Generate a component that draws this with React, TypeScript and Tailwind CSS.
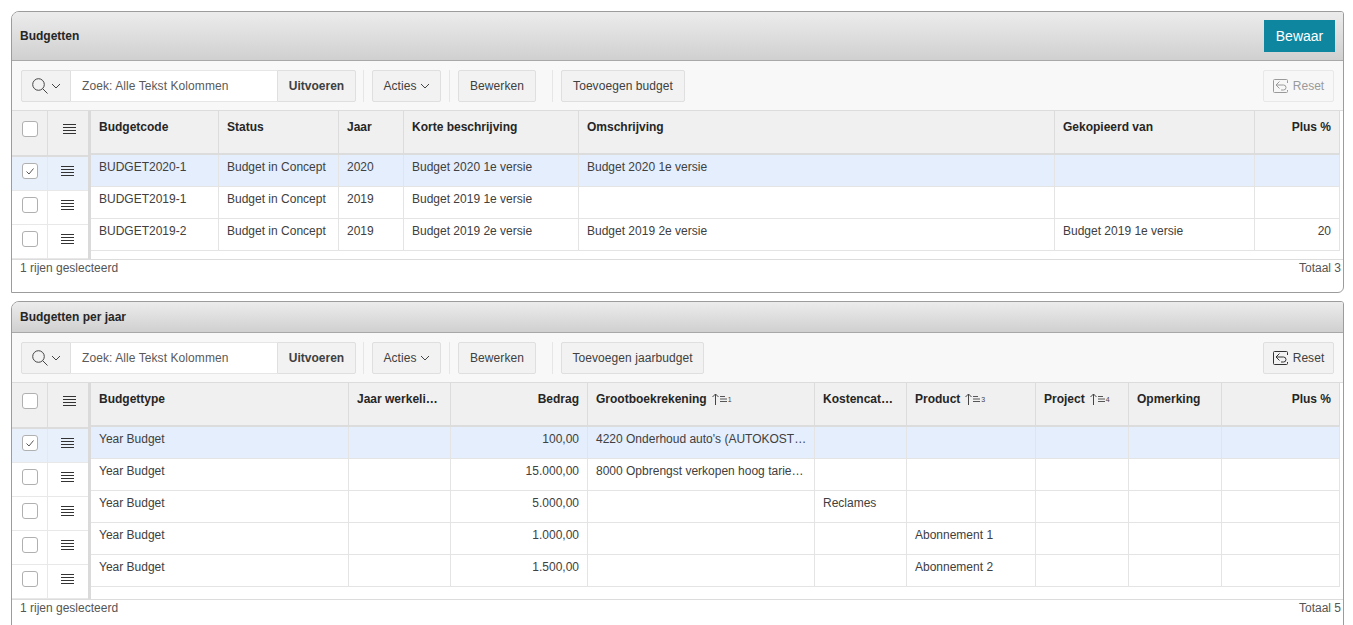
import type { ReactNode } from "react";

const budgetRows = [
  { selected: true, cells: ["BUDGET2020-1", "Budget in Concept", "2020", "Budget 2020 1e versie", "Budget 2020 1e versie", "", ""] },
  { selected: false, cells: ["BUDGET2019-1", "Budget in Concept", "2019", "Budget 2019 1e versie", "", "", ""] },
  { selected: false, cells: ["BUDGET2019-2", "Budget in Concept", "2019", "Budget 2019 2e versie", "Budget 2019 2e versie", "Budget 2019 1e versie", "20"] },
];

const yearRows = [
  { selected: true, cells: ["Year Budget", "", "100,00", "4220 Onderhoud auto's (AUTOKOST…", "", "", "", "", ""] },
  { selected: false, cells: ["Year Budget", "", "15.000,00", "8000 Opbrengst verkopen hoog tarie…", "", "", "", "", ""] },
  { selected: false, cells: ["Year Budget", "", "5.000,00", "", "Reclames", "", "", "", ""] },
  { selected: false, cells: ["Year Budget", "", "1.000,00", "", "", "Abonnement 1", "", "", ""] },
  { selected: false, cells: ["Year Budget", "", "1.500,00", "", "", "Abonnement 2", "", "", ""] },
];

function SearchIcon() {
  return (
    <svg width="16" height="16" viewBox="0 0 16 16" fill="none" stroke="#444" strokeWidth="1">
      <circle cx="6.5" cy="6.5" r="5.8" />
      <path d="M10.7 10.7 L15.5 15.5" />
    </svg>
  );
}

function Chevron() {
  return (
    <svg width="10" height="6" viewBox="0 0 9 6" fill="none" stroke="#444" strokeWidth="1">
      <path d="M0.5 1 L4.5 5 L8.5 1" />
    </svg>
  );
}

function MenuLines() {
  return (
    <svg width="13" height="11" viewBox="0 0 13 11" fill="none" stroke="#333" strokeWidth="1">
      <path d="M0 0.5H13M0 3.5H13M0 6.5H13M0 9.5H13" />
    </svg>
  );
}

function ResetIcon({ muted }: { muted: boolean }) {
  return (
    <svg width="15" height="14" viewBox="0 0 15 14" fill="none" stroke={muted ? "#9a9a9a" : "#333"} strokeWidth="1">
      <path d="M14.5 4 V1.5 Q14.5 0.5 13.5 0.5 H1.5 Q0.5 0.5 0.5 1.5 V12.5 Q0.5 13.5 1.5 13.5 H13.5 Q14.5 13.5 14.5 12.5 V11" />
      <path d="M6.5 2.5 L3 6 L6.5 9.5 M3 6 H10.5 Q13 6 13 8.5 Q13 11 10.5 11 H8" />
    </svg>
  );
}

function SortMark({ order }: { order: number }) {
  return (
    <span className="ml-[5px] inline-flex h-[16px] items-center">
      <svg width="16" height="12" viewBox="0 0 16 12" fill="none" stroke="#444" strokeWidth="1">
        <path d="M3.5 12 V1 M0.5 4 L3.5 1 L6.5 4" />
        <path d="M8 3.5H13M8 6H15M8 8.5H15" strokeWidth="0.9" />
      </svg>
      <span className="text-[7px] font-normal leading-none text-[#444]">{order}</span>
    </span>
  );
}

function Checkbox({ checked }: { checked?: boolean }) {
  return (
    <span className="flex h-[16px] w-[16px] items-center justify-center rounded-[3px] border border-[#b0b0b0] bg-white">
      {checked ? (
        <svg width="8" height="7" viewBox="0 0 8 7" fill="none" stroke="#444" strokeWidth="0.9">
          <path d="M0.5 3.5 L3 6 L7.5 0.5" />
        </svg>
      ) : null}
    </span>
  );
}

function ToolButton({ children, className }: { children: ReactNode; className?: string }) {
  return (
    <button className={`flex h-[32px] items-center justify-center rounded-[2px] border border-[#dfdfdf] bg-[#f2f2f2] text-[12px] tracking-[0.07px] text-[#404040] ${className ?? ""}`}>
      {children}
    </button>
  );
}

function Toolbar({ addLabel, addWidth, resetDisabled }: { addLabel: string; addWidth: string; resetDisabled: boolean }) {
  return (
    <div className="flex h-[50px] items-center border-b border-[#dcdcdc] bg-[#f8f8f8] pl-[9px] pr-[9px] pt-[1px]">
      <div className="flex h-[32px] w-[335px] shrink-0">
        <button className="flex w-[50px] items-center justify-center gap-[3px] rounded-l-[2px] border border-[#dfdfdf] bg-[#f2f2f2]">
          <SearchIcon />
          <Chevron />
        </button>
        <div className="flex flex-1 items-center border-y border-[#e6e6e6] bg-white pl-[11px] text-[12px] tracking-[0.08px] text-[#5a5a5a]">Zoek: Alle Tekst Kolommen</div>
        <button className="w-[79px] rounded-r-[2px] border border-[#dfdfdf] bg-[#f2f2f2] text-[12px] font-bold text-[#404040]">Uitvoeren</button>
      </div>
      <span className="ml-[7px] mr-[8px] h-[32px] w-px bg-[#e6e6e6]" />
      <ToolButton className="w-[69px] gap-[3px]">
        Acties
        <Chevron />
      </ToolButton>
      <span className="ml-[8px] mr-[8px] h-[32px] w-px bg-[#e6e6e6]" />
      <ToolButton className="w-[78px]">Bewerken</ToolButton>
      <span className="ml-[16px] mr-[8px] h-[32px] w-px bg-[#e6e6e6]" />
      <ToolButton className={addWidth}>{addLabel}</ToolButton>
      <div className="flex-1" />
      {resetDisabled ? (
        <button className="flex h-[32px] w-[71px] items-center justify-center gap-[5px] rounded-[2px] border border-[#e8e8e8] bg-[#f7f7f7] text-[12px] text-[#9a9a9a]">
          <ResetIcon muted />
          Reset
        </button>
      ) : (
        <ToolButton className="w-[71px] gap-[5px]">
          <ResetIcon muted={false} />
          Reset
        </ToolButton>
      )}
    </div>
  );
}

function SelectorColumn({ rows }: { rows: { selected: boolean }[] }) {
  return (
    <div className="w-[79px] shrink-0 border-r-[3px] border-[#dadada]">
      <div className="flex h-[46px] border-b-2 border-[#dcdcdc] bg-[#f0f0f0]">
        <div className="flex w-[36px] justify-center border-r border-[#dcdcdc] pt-[10px] pl-[1px]">
          <Checkbox />
        </div>
        <div className="flex flex-1 justify-center pt-[13px] pl-[3px]">
          <MenuLines />
        </div>
      </div>
      {rows.map((row, i) => (
        <div key={i} className={`flex h-[34px] border-b border-[#e8e8e8] ${row.selected ? "bg-[#e8f0fb]" : "bg-white"}`}>
          <div className="flex w-[36px] justify-center border-r border-[#e8e8e8] pt-[6px] pl-[1px]">
            <Checkbox checked={row.selected} />
          </div>
          <div className="flex flex-1 justify-center pt-[9px] pr-[1px]">
            <MenuLines />
          </div>
        </div>
      ))}
    </div>
  );
}

function Panel({
  title,
  headerClass,
  action,
  toolbar,
  rows,
  gridClass,
  columns,
  total,
}: {
  title: string;
  headerClass: string;
  action?: ReactNode;
  toolbar: ReactNode;
  rows: { selected: boolean; cells: string[] }[];
  gridClass: string;
  columns: { label: string; right?: boolean; order?: number }[];
  total: number;
}) {
  return (
    <section className="overflow-hidden rounded-tl-[8px] rounded-tr-[3px] rounded-br-[6px] border border-[#9c9c9c] bg-white">
      <div className={`flex items-center justify-between border-b border-[#a8a8a8] bg-gradient-to-b from-[#ececec] to-[#d0d0d0] pl-[8px] pr-[8px] ${headerClass}`}>
        <h2 className="text-[12px] font-bold text-[#262626]">{title}</h2>
        {action}
      </div>
      {toolbar}
      <div className="flex">
        <SelectorColumn rows={rows} />
        <div className="w-[1249px] shrink-0">
          <div className={`grid h-[44px] border-b-2 border-[#dcdcdc] bg-[#f0f0f0] ${gridClass}`}>
            {columns.map((col) => (
              <div key={col.label} className={`flex items-start border-r border-[#dcdcdc] px-[8px] pt-[8px] text-[12px] font-bold leading-[16px] text-[#262626] ${col.right ? "justify-end" : ""}`}>
                {col.label}
                {col.order ? <SortMark order={col.order} /> : null}
              </div>
            ))}
          </div>
          {rows.map((row, i) => (
            <div key={i} className={`grid h-[32px] border-b border-[#e4e4e4] ${gridClass} ${row.selected ? "bg-[#e4eefc]" : "bg-white"}`}>
              {row.cells.map((text, j) => (
                <div key={j} className={`overflow-hidden whitespace-nowrap border-r border-[#e4e4e4] px-[8px] pt-[4px] text-[12px] leading-[16px] text-[#404040] ${columns[j].right ? "text-right" : ""}`}>
                  {text}
                </div>
              ))}
            </div>
          ))}
        </div>
      </div>
      <div className="flex h-[33px] justify-between border-t border-[#dcdcdc] pl-[8px] pr-[2px] text-[12px] leading-[16px] text-[#555]">
        <span>1 rijen geslecteerd</span>
        <span>Totaal {total}</span>
      </div>
    </section>
  );
}

export default function App() {
  return (
    <div className="h-[625px] w-[1353px] overflow-hidden bg-white pl-[11px] pr-[9px] pt-[11px] font-['Liberation_Sans',Arial,sans-serif]">
      <Panel
        title="Budgetten"
        headerClass="h-[49px]"
        action={<button className="h-[32px] w-[71px] bg-[#0f869f] text-[14px] text-white">Bewaar</button>}
        toolbar={<Toolbar addLabel="Toevoegen budget" addWidth="w-[124px]" resetDisabled />}
        rows={budgetRows}
        gridClass="grid-cols-[128px_120px_65px_175px_476px_200px_85px]"
        columns={[
          { label: "Budgetcode" },
          { label: "Status" },
          { label: "Jaar" },
          { label: "Korte beschrijving" },
          { label: "Omschrijving" },
          { label: "Gekopieerd van" },
          { label: "Plus %", right: true },
        ]}
        total={3}
      />
      <div className="h-[8px]" />
      <Panel
        title="Budgetten per jaar"
        headerClass="h-[31px]"
        toolbar={<Toolbar addLabel="Toevoegen jaarbudget" addWidth="w-[143px]" resetDisabled={false} />}
        rows={yearRows}
        gridClass="grid-cols-[258px_102px_137px_227px_92px_129px_93px_93px_118px]"
        columns={[
          { label: "Budgettype" },
          { label: "Jaar werkeli…" },
          { label: "Bedrag", right: true },
          { label: "Grootboekrekening", order: 1 },
          { label: "Kostencat…" },
          { label: "Product", order: 3 },
          { label: "Project", order: 4 },
          { label: "Opmerking" },
          { label: "Plus %", right: true },
        ]}
        total={5}
      />
    </div>
  );
}
